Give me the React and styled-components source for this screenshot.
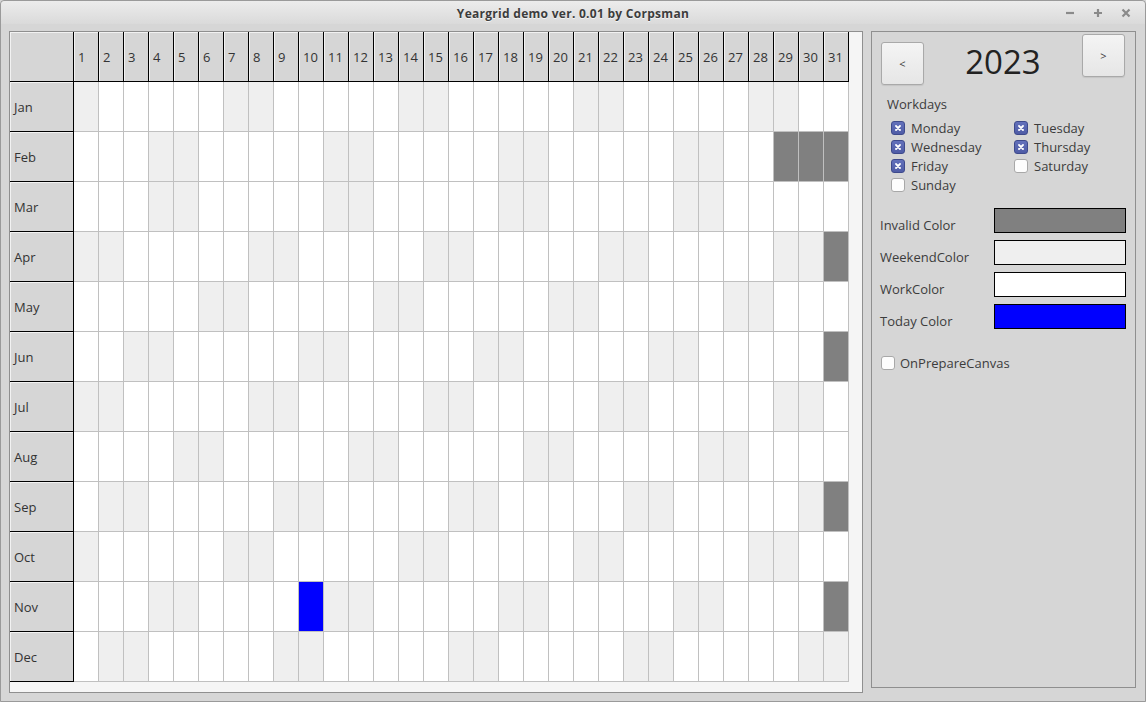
import React from 'react';
import styled, { createGlobalStyle } from 'styled-components';

const YEAR = 2023;
const TODAY = { month: 10, day: 10 };
const MONTHS = ['Jan', 'Feb', 'Mar', 'Apr', 'May', 'Jun', 'Jul', 'Aug', 'Sep', 'Oct', 'Nov', 'Dec'];
const DAYS = Array.from({ length: 31 }, (_, i) => i + 1);

const COLORS = {
  invalid: '#808080',
  weekend: '#efefef',
  work: '#ffffff',
  today: '#0000ff',
};

const GlobalStyle = createGlobalStyle`
  html, body {
    margin: 0;
    padding: 0;
    background: #d6d6d6;
    overflow: hidden;
  }
`;

const Window = styled.div`
  width: 1146px;
  height: 702px;
  box-sizing: border-box;
  border: 1px solid #9a9a9a;
  border-radius: 4px 4px 0 0;
  background: #d6d6d6;
  display: flex;
  flex-direction: column;
  font-family: 'Open Sans', 'Noto Sans', sans-serif;
  font-size: 13px;
  color: #3c3c3c;
`;

const TitleBar = styled.div`
  height: 23px;
  flex: none;
  position: relative;
  display: flex;
  align-items: center;
  justify-content: center;
  background: linear-gradient(#ececec, #dadada);
  border-radius: 4px 4px 0 0;
`;

const Title = styled.span`
  font-size: 12px;
  font-weight: 700;
  letter-spacing: 0.28px;
  color: #3c3c3c;
  text-shadow: 0 1px 0 rgba(255, 255, 255, 0.7);
  margin-top: 1px;
`;

const TitleControls = styled.div`
  position: absolute;
  right: 14px;
  top: 7px;
  display: flex;
  gap: 18px;
`;

const Body = styled.div`
  flex: 1;
  display: flex;
  align-items: flex-start;
  gap: 8px;
  padding: 7px 9px 8px 8px;
`;

const GridFrame = styled.div`
  width: 854px;
  height: 662px;
  box-sizing: border-box;
  border: 1px solid #8f8f8f;
  background: #f5f5f5;
`;

const Grid = styled.div`
  display: grid;
  grid-template-columns: 64px repeat(31, 25px);
  grid-template-rows: repeat(13, 50px);
`;

const FixedCell = styled.div`
  box-sizing: border-box;
  background: #d6d6d6;
  border-right: 1px solid #000;
  border-bottom: 1px solid #000;
  box-shadow: inset 1px 1px 0 #f2f2f2;
  display: flex;
  align-items: center;
  padding-left: 4px;
  font-size: 13px;
  color: #333;
`;

const DayCell = styled.div`
  box-sizing: border-box;
  background: ${(p) => p.$bg};
  border-right: 1px solid #c0c0c0;
  border-bottom: 1px solid #c0c0c0;
`;

const Panel = styled.div`
  width: 265px;
  height: 657px;
  box-sizing: border-box;
  border: 1px solid #8f8f8f;
  display: flex;
  flex-direction: column;
`;

const YearRow = styled.div`
  display: flex;
  height: 51px;
  margin: 2px 10px 0 9px;
`;

const NavButton = styled.button`
  width: 43px;
  height: 43px;
  align-self: ${(p) => (p.$low ? 'flex-end' : 'flex-start')};
  box-sizing: border-box;
  border: 1px solid #a9a9a9;
  border-radius: 3px;
  background: linear-gradient(#f4f4f4, #e6e6e6);
  box-shadow: 0 1px 1px rgba(0, 0, 0, 0.08);
  font-family: inherit;
  font-size: 11px;
  color: #3c3c3c;
  padding: 0;
  display: flex;
  align-items: center;
  justify-content: center;
`;

const YearLabel = styled.div`
  flex: 1;
  text-align: center;
  font-size: 33px;
  line-height: 40px;
  margin-top: 8px;
  color: #222;
`;

const SectionLabel = styled.div`
  margin: 10px 0 0 15px;
  line-height: 18px;
`;

const CheckGrid = styled.div`
  display: grid;
  grid-template-columns: 123px auto;
  grid-auto-rows: 19px;
  margin: 5px 0 0 19px;
`;

const CheckRow = styled.label`
  display: flex;
  align-items: center;
  gap: ${(p) => p.$gap || 6}px;
  line-height: 18px;
`;

const Box = styled.span`
  width: 14px;
  height: 14px;
  box-sizing: border-box;
  border-radius: 3px;
  display: flex;
  align-items: center;
  justify-content: center;
  border: 1px solid ${(p) => (p.$checked ? '#3e4a8c' : '#a8a8a8')};
  background: ${(p) => (p.$checked ? 'linear-gradient(#6371bb, #4f5ca6)' : '#fdfdfd')};
`;

const ColorList = styled.div`
  margin: 14px 0 0 8px;
  display: flex;
  flex-direction: column;
`;

const ColorRow = styled.div`
  display: flex;
  height: 32px;
`;

const ColorLabel = styled.div`
  width: 114px;
  padding-top: 9px;
  line-height: 17px;
`;

const Swatch = styled.div`
  width: 132px;
  height: 25px;
  box-sizing: border-box;
  border: 1px solid #000;
  background: ${(p) => p.$color};
`;

const PrepareRow = styled.div`
  margin: 18px 0 0 9px;
`;

const CheckBox = ({ checked, label, gap }) => (
  <CheckRow $gap={gap}>
    <Box $checked={checked}>
      {checked && (
        <svg width="6" height="6" viewBox="0 0 6 6">
          <path d="M1 1L5 5M5 1L1 5" stroke="#fff" strokeWidth="1.8" strokeLinecap="round" />
        </svg>
      )}
    </Box>
    <span>{label}</span>
  </CheckRow>
);

const WinIcon = ({ d }) => (
  <svg width="10" height="10" viewBox="0 0 10 10">
    <path d={d} stroke="#8a8a8a" strokeWidth="2.2" fill="none" />
  </svg>
);

const cellColor = (month, day) => {
  const last = new Date(YEAR, month + 1, 0).getDate();
  if (day > last) return COLORS.invalid;
  if (month === TODAY.month && day === TODAY.day) return COLORS.today;
  const dow = new Date(YEAR, month, day).getDay();
  return dow === 0 || dow === 6 ? COLORS.weekend : COLORS.work;
};

const WORKDAYS = [
  ['Monday', true],
  ['Tuesday', true],
  ['Wednesday', true],
  ['Thursday', true],
  ['Friday', true],
  ['Saturday', false],
  ['Sunday', false],
];

const COLOR_ROWS = [
  ['Invalid Color', COLORS.invalid],
  ['WeekendColor', COLORS.weekend],
  ['WorkColor', COLORS.work],
  ['Today Color', COLORS.today],
];

export default function App() {
  return (
    <>
      <GlobalStyle />
      <Window>
        <TitleBar>
          <Title>Yeargrid demo ver. 0.01 by Corpsman</Title>
          <TitleControls>
            <WinIcon d="M1 5H9" />
            <WinIcon d="M1 5H9M5 1V9" />
            <WinIcon d="M1.5 1.5L8.5 8.5M8.5 1.5L1.5 8.5" />
          </TitleControls>
        </TitleBar>
        <Body>
          <GridFrame>
            <Grid>
              <FixedCell />
              {DAYS.map((d) => (
                <FixedCell key={d}>{d}</FixedCell>
              ))}
              {MONTHS.map((m, mi) => (
                <React.Fragment key={m}>
                  <FixedCell>{m}</FixedCell>
                  {DAYS.map((d) => (
                    <DayCell key={d} $bg={cellColor(mi, d)} />
                  ))}
                </React.Fragment>
              ))}
            </Grid>
          </GridFrame>
          <Panel>
            <YearRow>
              <NavButton $low>&lt;</NavButton>
              <YearLabel>{YEAR}</YearLabel>
              <NavButton>&gt;</NavButton>
            </YearRow>
            <SectionLabel>Workdays</SectionLabel>
            <CheckGrid>
              {WORKDAYS.map(([name, on]) => (
                <CheckBox key={name} label={name} checked={on} />
              ))}
            </CheckGrid>
            <ColorList>
              {COLOR_ROWS.map(([name, c]) => (
                <ColorRow key={name}>
                  <ColorLabel>{name}</ColorLabel>
                  <Swatch $color={c} />
                </ColorRow>
              ))}
            </ColorList>
            <PrepareRow>
              <CheckBox label="OnPrepareCanvas" checked={false} gap={5} />
            </PrepareRow>
          </Panel>
        </Body>
      </Window>
    </>
  );
}
